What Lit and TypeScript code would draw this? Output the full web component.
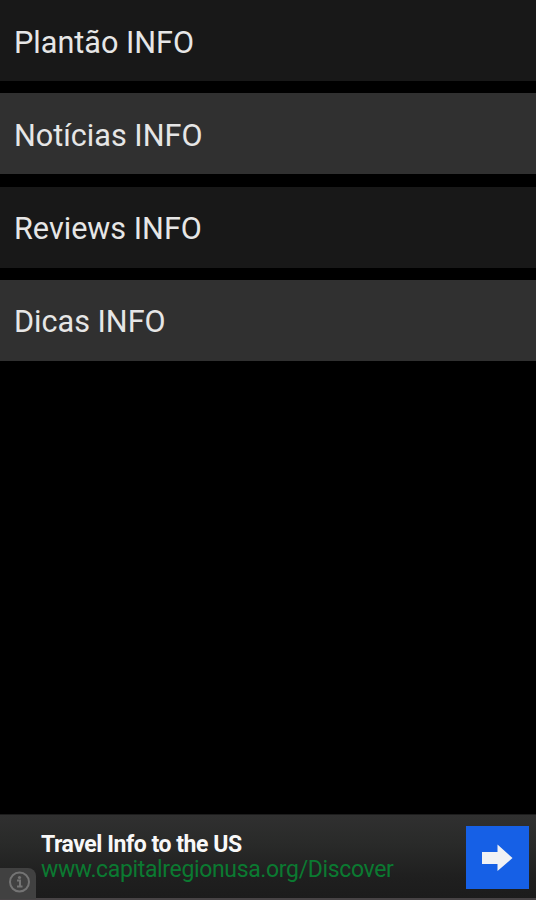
import { LitElement, html, css } from "lit";
import { customElement } from "lit/decorators.js";
import { classMap } from "lit/directives/class-map.js";

const SECTIONS = ["Plantão INFO", "Notícias INFO", "Reviews INFO", "Dicas INFO"];

@customElement("ad-banner")
export class AdBanner extends LitElement {
  static styles = css`
    :host {
      display: flex;
      position: relative;
      box-sizing: border-box;
      height: 86px;
      padding: 11px 7px 0 41px;
      border-top: 1px solid #1c1c1c;
      border-bottom: 2px solid #484446;
      background: linear-gradient(#303030, #292a29 35%, #1f1f1f 75%, #1c1c1c);
      justify-content: space-between;
      align-items: flex-start;
    }
    .copy {
      padding-top: 6px;
      white-space: nowrap;
    }
    .title {
      font-size: 23px;
      line-height: 25px;
      font-weight: 700;
      color: #f8f8f8;
      letter-spacing: -0.46px;
    }
    .url {
      font-size: 23px;
      line-height: 25px;
      color: #0b7a31;
      letter-spacing: -0.35px;
    }
    .go {
      display: flex;
      width: 63px;
      height: 63px;
      background: #1660e6;
    }
    .info {
      position: absolute;
      left: 0;
      bottom: -1px;
      width: 36px;
      height: 31px;
      border-top-right-radius: 8px;
      background: #414141;
    }
    svg {
      display: block;
    }
  `;

  render() {
    return html`
      <div class="copy">
        <div class="title">Travel Info to the US</div>
        <div class="url">www.capitalregionusa.org/Discover</div>
      </div>
      <div class="go">
        <svg width="63" height="63" viewBox="0 0 63 63">
          <path d="M16 26H31.5V18.5L46.5 32L31.5 45V38H16Z" fill="#f1f2f5" />
        </svg>
      </div>
      <div class="info">
        <svg width="36" height="31" viewBox="0 0 36 31">
          <circle cx="19.5" cy="14" r="9.5" fill="none" stroke="#747474" stroke-width="2" />
          <circle cx="19.5" cy="9.5" r="1.6" fill="#747474" />
          <path d="M17 12.5H20V18M17 18.5H22.5" fill="none" stroke="#747474" stroke-width="2" />
        </svg>
      </div>
    `;
  }
}

@customElement("app-root")
export class AppRoot extends LitElement {
  static styles = css`
    :host {
      display: flex;
      flex-direction: column;
      width: 536px;
      height: 900px;
      overflow: hidden;
      background: #000;
      font-family: Roboto, "Liberation Sans", sans-serif;
    }
    .list {
      display: flex;
      flex-direction: column;
      flex: 1;
      gap: 12.3px;
    }
    .row {
      display: flex;
      align-items: center;
      box-sizing: border-box;
      height: 81px;
      padding: 4px 14px 0;
      background: #181818;
      color: #e6e6e6;
      font-size: 30.6px;
      line-height: 36px;
      white-space: nowrap;
    }
    .row.alt {
      background: #303030;
    }
  `;

  render() {
    return html`
      <div class="list">
        ${SECTIONS.map(
          (name, i) => html`<div class=${classMap({ row: true, alt: i % 2 === 1 })}>${name}</div>`
        )}
      </div>
      <ad-banner></ad-banner>
    `;
  }
}
